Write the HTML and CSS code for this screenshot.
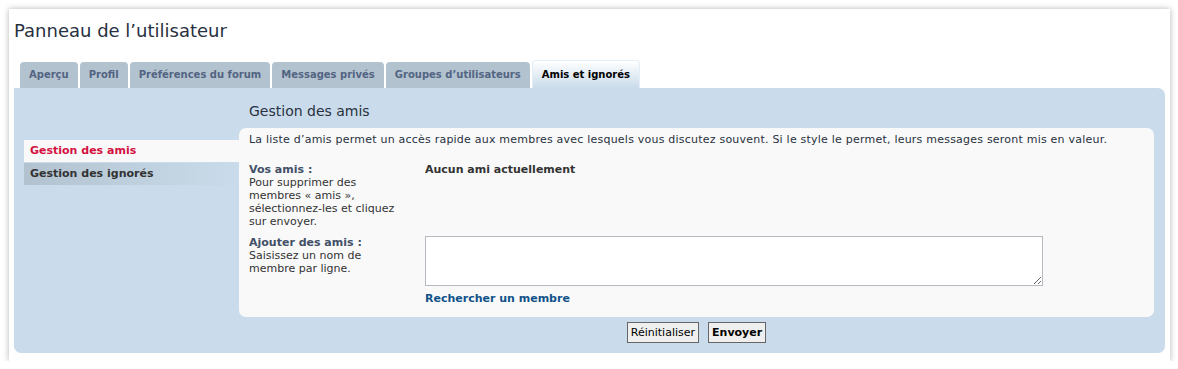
FILE: index.html
```html
<!DOCTYPE html>
<html lang="fr">

<head>
    <meta charset="UTF-8">
    <meta name="viewport" content="width=device-width, initial-scale=1.0">
    <title>Panneau de l’utilisateur</title>

    <link rel="stylesheet" href="styles.css">
</head>

<body>
    <div id="wrap">
        <h2 class="page-title">Panneau de l’utilisateur</h2>

        <ul id="tabs">
            <li class="tab">Aperçu</li>
            <li class="tab">Profil</li>
            <li class="tab">Préférences du forum</li>
            <li class="tab">Messages privés</li>
            <li class="tab">Groupes d’utilisateurs</li>
            <li class="tab active">Amis et ignorés</li>
        </ul>

        <div id="cp-main">
            <div id="navigation">
                <ul>
                    <li class="nav-item current">Gestion des amis</li>
                    <li class="nav-item">Gestion des ignorés</li>
                </ul>
            </div>

            <div id="cp-content">
                <h2 class="section-title">Gestion des amis</h2>

                <div class="panel">
                    <p class="intro">La liste d’amis permet un accès rapide aux membres avec lesquels vous discutez souvent. Si le style le permet, leurs messages seront mis en valeur.</p>

                    <dl class="row">
                        <dt><b>Vos amis :</b><span>Pour supprimer des<br>membres « amis »,<br>sélectionnez-les et cliquez<br>sur envoyer.</span></dt>
                        <dd><strong>Aucun ami actuellement</strong></dd>
                    </dl>

                    <dl class="row">
                        <dt><b>Ajouter des amis :</b><span>Saisissez un nom de<br>membre par ligne.</span></dt>
                        <dd>
                            <textarea class="inputbox"></textarea>
                            <a class="search-link" href="#">Rechercher un membre</a>
                        </dd>
                    </dl>
                </div>

                <div id="buttons">
                    <button class="button2">Réinitialiser</button>
                    <button class="button1">Envoyer</button>
                </div>
            </div>
        </div>
    </div>
</body>
</html>
```

FILE: styles.css
```css
body {
    margin: 0;
    background-color: #fff;
    font-family: "DejaVu Sans", Verdana, sans-serif;
    color: #28313f;
}

#wrap {
    margin: 9px 8px 0 9px;
    height: 352px;
    padding: 0 5px;
    background-color: #fff;
    box-shadow: 0 0 6px rgba(0, 0, 0, 0.3);
    box-sizing: border-box;
}

.page-title {
    margin: 0;
    padding: 11px 0 0 0;
    height: 52px;
    box-sizing: border-box;
    font-size: 18px;
    font-weight: normal;
    color: #28313f;
}

#tabs {
    list-style: none;
    display: flex;
    gap: 2px;
    margin: 0;
    padding: 0 0 0 6px;
    height: 27px;
    align-items: flex-end;
}

.tab {
    height: 26px;
    line-height: 26px;
    padding: 0 9px;
    background-color: #b2c2cf;
    border-radius: 4px 4px 0 0;
    font-size: 10px;
    font-weight: bold;
    color: #536482;
}

.tab.active {
    height: 28px;
    line-height: 28px;
    background: linear-gradient(to bottom, #ffffff, #cadceb);
    border: 1px solid #e4eef7;
    border-bottom: none;
    box-sizing: border-box;
    color: #000;
}

#cp-main {
    display: flex;
    height: 265px;
    background-color: #cadceb;
    border-radius: 0 7px 7px 7px;
    padding: 0 11px 0 10px;
}

#navigation {
    width: 215px;
    padding-top: 52px;
}

#navigation ul {
    list-style: none;
    margin: 0;
    padding: 0;
}

.nav-item {
    height: 22px;
    line-height: 22px;
    padding-left: 6px;
    margin-bottom: 1px;
    font-size: 11px;
    font-weight: bold;
    color: #333;
    background: linear-gradient(to right, #b2c2cf, #cadceb);
}

.nav-item.current {
    background: #f9f9f9;
    color: #d31141;
}

#cp-content {
    flex: 1;
}

.section-title {
    margin: 0;
    height: 40px;
    padding: 15px 0 0 10px;
    box-sizing: border-box;
    font-size: 14px;
    font-weight: normal;
    color: #28313f;
}

.panel {
    background-color: #f9f9f9;
    border-radius: 7px;
    padding: 5px 10px 10px 10px;
    height: 189px;
    box-sizing: border-box;
    font-size: 11px;
    line-height: 13px;
}

.intro {
    margin: 0 0 17px 0;
    letter-spacing: 0.22px;
    color: #28313f;
}

.row {
    display: flex;
    margin: 0 0 8px 0;
}

.row dt {
    width: 176px;
    color: #333;
}

.row dt b {
    display: block;
    color: #425067;
}

.row dt span {
    display: block;
}

.row dd {
    margin: 0;
    flex: 1;
}

.row dd strong {
    color: #333;
}

.inputbox {
    display: block;
    width: 618px;
    height: 50px;
    margin: 0 0 6px 0;
    border: 1px solid #b4bac0;
    background-color: #fff;
    box-sizing: border-box;
}

.search-link {
    font-weight: bold;
    color: #105289;
    text-decoration: none;
}

#buttons {
    display: flex;
    justify-content: center;
    gap: 9px;
    padding-top: 5px;
}

button {
    height: 21px;
    padding: 0 3px;
    border: 1px solid #666;
    background-color: #efefef;
    font-family: "DejaVu Sans", Verdana, sans-serif;
    font-size: 11px;
    color: #000;
}

.button1 {
    font-weight: bold;
}
```
